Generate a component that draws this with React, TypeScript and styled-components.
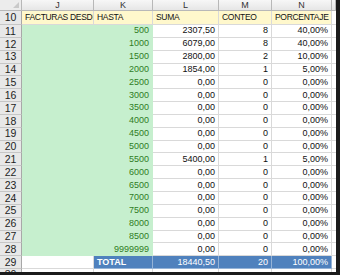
import React from "react"
import styled, { createGlobalStyle } from "styled-components"

const GlobalStyle = createGlobalStyle`
  html, body {
    margin: 0;
    padding: 0;
    background: #1b1b1b;
  }
  * {
    box-sizing: border-box;
  }
`

const colors = {
  grid: "#d9d9d9",
  headBg: "#ececec",
  headLine: "#b8b8b8",
  yellow: "#fff8cc",
  green: "#c6efce",
  greenText: "#2f7d1f",
  blue: "#4f81bd",
  blueLine: "#95b3d7",
}

const Frame = styled.div`
  width: 340px;
  height: 275px;
  background: #1b1b1b;
  overflow: hidden;
`

const Sheet = styled.div`
  display: grid;
  grid-template-columns: 22px 72px 59px 66px 53px 60px 4px;
  grid-template-rows: 11px 14px repeat(19, 12.85px) 1fr;
  width: 336px;
  height: 272px;
  background: #fff;
  overflow: hidden;
  font-family: "Liberation Sans", Arial, sans-serif;
  font-size: 9px;
`

const Corner = styled.div`
  position: relative;
  background: ${colors.headBg};
  border-right: 1px solid ${colors.headLine};
  border-bottom: 1px solid ${colors.headLine};

  &::after {
    content: "";
    position: absolute;
    right: 2px;
    bottom: 2px;
    width: 0;
    height: 0;
    border-left: 6px solid transparent;
    border-bottom: 6px solid #c9c9c9;
  }
`

const ColHead = styled.div`
  display: flex;
  align-items: center;
  justify-content: center;
  background: linear-gradient(#f7f7f7, #e6e6e6);
  border-right: 1px solid ${colors.headLine};
  border-bottom: 1px solid ${colors.headLine};
  color: #333;
  font-size: 9px;
  line-height: 1;
`

const RowHead = styled.div`
  display: flex;
  align-items: center;
  justify-content: center;
  background: #e8e8e8;
  border-right: 1px solid #a8a8a8;
  border-bottom: 1px solid #c6c6c6;
  color: #1e1e1e;
  font-size: 10.5px;
  line-height: 1;
`

type Kind = "yellow" | "green" | "white" | "total"

const bgFor = (k: Kind) =>
  k === "yellow" ? colors.yellow : k === "green" ? colors.green : k === "total" ? colors.blue : "#fff"

const Cell = styled.div<{ $kind: Kind; $align?: "left" | "right" }>`
  display: flex;
  align-items: center;
  justify-content: ${(p) => (p.$align === "left" ? "flex-start" : "flex-end")};
  padding: 0 3px;
  overflow: hidden;
  white-space: nowrap;
  line-height: 1;
  background: ${(p) => bgFor(p.$kind)};
  color: ${(p) => (p.$kind === "green" ? colors.greenText : p.$kind === "total" ? "#fff" : "#111")};
  font-weight: ${(p) => (p.$kind === "total" && p.$align === "left" ? "bold" : "normal")};
  font-size: ${(p) => (p.$kind === "yellow" ? "8.5px" : "9px")};
  letter-spacing: ${(p) => (p.$kind === "yellow" ? "-0.3px" : "0")};
  border-right: 1px solid
    ${(p) => (p.$kind === "total" ? colors.blueLine : p.$kind === "green" ? colors.green : colors.grid)};
  border-bottom: 1px solid
    ${(p) => (p.$kind === "total" ? colors.blueLine : p.$kind === "green" ? colors.green : colors.grid)};
`

const rows: [string, string, string, string][] = [
  ["500", "2307,50", "8", "40,00%"],
  ["1000", "6079,00", "8", "40,00%"],
  ["1500", "2800,00", "2", "10,00%"],
  ["2000", "1854,00", "1", "5,00%"],
  ["2500", "0,00", "0", "0,00%"],
  ["3000", "0,00", "0", "0,00%"],
  ["3500", "0,00", "0", "0,00%"],
  ["4000", "0,00", "0", "0,00%"],
  ["4500", "0,00", "0", "0,00%"],
  ["5000", "0,00", "0", "0,00%"],
  ["5500", "5400,00", "1", "5,00%"],
  ["6000", "0,00", "0", "0,00%"],
  ["6500", "0,00", "0", "0,00%"],
  ["7000", "0,00", "0", "0,00%"],
  ["7500", "0,00", "0", "0,00%"],
  ["8000", "0,00", "0", "0,00%"],
  ["8500", "0,00", "0", "0,00%"],
  ["9999999", "0,00", "0", "0,00%"],
]

export default function App() {
  return (
    <Frame>
      <GlobalStyle />
      <Sheet>
        <Corner />
        {["J", "K", "L", "M", "N", ""].map((c, i) => (
          <ColHead key={i}>{c}</ColHead>
        ))}

        <RowHead>10</RowHead>
        <Cell $kind="yellow" $align="left">FACTURAS DESDE</Cell>
        <Cell $kind="yellow" $align="left">HASTA</Cell>
        <Cell $kind="yellow" $align="left">SUMA</Cell>
        <Cell $kind="yellow" $align="left">CONTEO</Cell>
        <Cell $kind="yellow" $align="left">PORCENTAJE</Cell>
        <Cell $kind="white" />

        {rows.map(([hasta, suma, conteo, pct], i) => (
          <React.Fragment key={hasta}>
            <RowHead>{i + 11}</RowHead>
            <Cell $kind="green" />
            <Cell $kind="green">{hasta}</Cell>
            <Cell $kind="white">{suma}</Cell>
            <Cell $kind="white">{conteo}</Cell>
            <Cell $kind="white">{pct}</Cell>
            <Cell $kind="white" />
          </React.Fragment>
        ))}

        <RowHead>29</RowHead>
        <Cell $kind="white" />
        <Cell $kind="total" $align="left">TOTAL</Cell>
        <Cell $kind="total">18440,50</Cell>
        <Cell $kind="total">20</Cell>
        <Cell $kind="total">100,00%</Cell>
        <Cell $kind="white" />

        <RowHead>30</RowHead>
        <Cell $kind="white" />
        <Cell $kind="white" />
        <Cell $kind="white" />
        <Cell $kind="white" />
        <Cell $kind="white" />
        <Cell $kind="white" />
      </Sheet>
    </Frame>
  )
}
